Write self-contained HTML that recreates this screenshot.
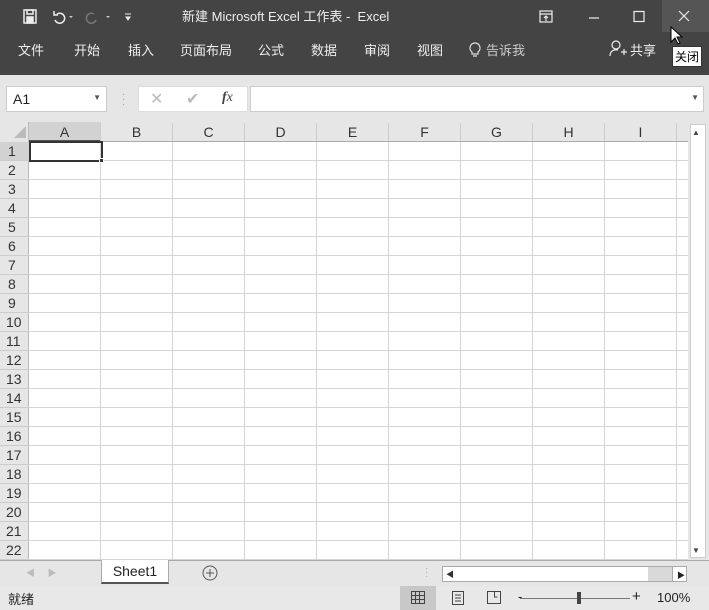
<!DOCTYPE html><html><head><meta charset="utf-8"><style>
*{margin:0;padding:0;box-sizing:border-box}
body{width:709px;height:610px;overflow:hidden;background:#e6e6e6;font-family:"Liberation Sans","Noto Sans CJK SC",sans-serif;position:relative;font-size:13px;color:#222}
.a{position:absolute}
.top{left:0;top:0;width:709px;height:75px;background:#444}
.w{color:#eee}
.tab{top:40px;color:#eee;font-size:13px}
.ch{top:123px;height:19px;width:72px;text-align:center;font-size:14px;color:#333;border-right:1px solid #ccc;line-height:19px}
.rn{left:0;width:29px;height:19px;font-size:14px;color:#333;padding-left:8px;line-height:19px;border-bottom:1px solid #ccc}
</style></head><body>
<div class="a top"></div>
<div class="a" style="left:662px;top:0;width:47px;height:32px;background:#555"></div>
<svg class="a" style="left:22px;top:8px" width="120" height="18"><g fill="none" stroke="#eee" stroke-width="1.5"><rect x="2" y="2" width="12" height="13"/><rect x="5" y="9" width="6" height="6" fill="#eee"/><rect x="5" y="2" width="6" height="4"/><path d="M35 6 a5 5 0 1 1 -2 6 M32 3 v4 h4"/><path d="M72 6 a5 5 0 1 0 2 6" stroke="#777"/></g><path d="M47 8l2 2 2-2z M84 8l2 2 2-2z" fill="#ccc"/><path d="M103 6h6 M104 9l2 3 2-3z" stroke="#eee" fill="#eee"/></svg>
<div class="a w" style="left:182px;top:6px;font-size:13px">新建 Microsoft Excel 工作表 - &nbsp;Excel</div>
<svg class="a" style="left:538px;top:8px" width="160" height="18"><g fill="none" stroke="#eee" stroke-width="1.2"><rect x="2" y="3" width="12" height="11"/><path d="M2 6h12 M8 13V8 M6 10l2-2 2 2"/><path d="M51 10h10"/><rect x="96" y="3.5" width="10" height="10"/><path d="M141 3l10 10 M151 3l-10 10"/></g></svg>
<div class="a tab" style="left:18px">文件</div>
<div class="a tab" style="left:74px">开始</div>
<div class="a tab" style="left:128px">插入</div>
<div class="a tab" style="left:180px">页面布局</div>
<div class="a tab" style="left:258px">公式</div>
<div class="a tab" style="left:311px">数据</div>
<div class="a tab" style="left:364px">审阅</div>
<div class="a tab" style="left:417px">视图</div>
<svg class="a" style="left:468px;top:42px" width="14" height="16"><path d="M7 1a5 5 0 0 0-3 9v2h6v-2a5 5 0 0 0-3-9zM5 14h4" fill="none" stroke="#ddd" stroke-width="1.2"/></svg>
<div class="a tab" style="left:486px;color:#ccc">告诉我</div>
<svg class="a" style="left:608px;top:39px" width="20" height="20"><g fill="none" stroke="#eee" stroke-width="1.2"><circle cx="8" cy="6" r="4"/><path d="M2 17c0-5 4-7 8-6 M13 13h6 M16 10v6"/></g></svg>
<div class="a tab" style="left:630px">共享</div>
<svg class="a" style="left:670px;top:26px" width="14" height="20"><path d="M1 1v15l4-4 3 6 2-1-3-6h5z" fill="#fff" stroke="#000"/></svg>
<div class="a" style="left:672px;top:46px;background:#fff;border:1px solid #333;font-size:12px;padding:1px 2px;color:#000">关闭</div>
<div class="a" style="left:6px;top:86px;width:101px;height:26px;background:#fff;border:1px solid #ccc;padding:4px 6px;font-size:14px">A1<span style="position:absolute;right:5px;top:6px;font-size:8px;color:#555">▼</span></div>
<div class="a" style="left:122px;top:92px;color:#999;font-size:10px;line-height:5px">·<br>·<br>·</div>
<div class="a" style="left:138px;top:86px;width:110px;height:26px;background:#fff;border:1px solid #ddd"></div>
<div class="a" style="left:150px;top:89px;color:#bbb;font-size:16px">✕</div>
<div class="a" style="left:186px;top:89px;color:#bbb;font-size:16px">✔</div>
<div class="a" style="left:222px;top:90px;font-family:'Liberation Serif',serif;font-style:italic;font-size:14px;color:#444"><b>f</b>x</div>
<div class="a" style="left:250px;top:86px;width:454px;height:26px;background:#fff;border:1px solid #ccc"><span style="position:absolute;right:4px;top:6px;font-size:8px;color:#555">▼</span></div>
<div class="a" style="left:0;top:122px;width:688px;height:438px;background:#fff;
background-image:linear-gradient(#e6e6e6,#e6e6e6),repeating-linear-gradient(to bottom,transparent 0 18px,#d4d4d4 18px 19px),repeating-linear-gradient(to right,transparent 0 71px,#d4d4d4 71px 72px);
background-size:688px 20px,688px 418px,659px 438px;background-position:0 0,0 20px,29px 0;background-repeat:no-repeat,no-repeat,no-repeat"></div>
<div class="a" style="left:0;top:122px;width:29px;height:438px;background:#e6e6e6;border-right:1px solid #bbb"></div>
<div class="a" style="left:29px;top:122px;width:72px;height:20px;background:#d2d2d2;border-bottom:2px solid #555"></div>
<div class="a" style="left:0;top:142px;width:29px;height:19px;background:#d2d2d2"></div>
<svg class="a" style="left:14px;top:126px" width="12" height="12"><path d="M12 0V12H0z" fill="#bbb"/></svg>
<div class="a ch" style="left:29px">A</div><div class="a ch" style="left:101px">B</div><div class="a ch" style="left:173px">C</div><div class="a ch" style="left:245px">D</div><div class="a ch" style="left:317px">E</div><div class="a ch" style="left:389px">F</div><div class="a ch" style="left:461px">G</div><div class="a ch" style="left:533px">H</div><div class="a ch" style="left:605px;width:72px">I</div>
<div class="a" style="left:29px;top:141px;width:659px;height:1px;background:#aaa"></div>
<div class="a" style="left:29px;top:141px;width:74px;height:21px;border:2px solid #333"></div>
<div class="a" style="left:99px;top:158px;width:5px;height:5px;background:#333;border:1px solid #fff"></div>
<div class="a rn" style="top:142px">1</div><div class="a rn" style="top:161px">2</div><div class="a rn" style="top:180px">3</div><div class="a rn" style="top:199px">4</div><div class="a rn" style="top:218px">5</div><div class="a rn" style="top:237px">6</div><div class="a rn" style="top:256px">7</div><div class="a rn" style="top:275px">8</div><div class="a rn" style="top:294px">9</div><div class="a rn" style="top:313px;padding-left:6px">10</div><div class="a rn" style="top:332px;padding-left:6px">11</div><div class="a rn" style="top:351px;padding-left:6px">12</div><div class="a rn" style="top:370px;padding-left:6px">13</div><div class="a rn" style="top:389px;padding-left:6px">14</div><div class="a rn" style="top:408px;padding-left:6px">15</div><div class="a rn" style="top:427px;padding-left:6px">16</div><div class="a rn" style="top:446px;padding-left:6px">17</div><div class="a rn" style="top:465px;padding-left:6px">18</div><div class="a rn" style="top:484px;padding-left:6px">19</div><div class="a rn" style="top:503px;padding-left:6px">20</div><div class="a rn" style="top:522px;padding-left:6px">21</div><div class="a rn" style="top:541px;padding-left:6px">22</div>
<div class="a" style="left:688px;top:122px;width:21px;height:438px;background:#e6e6e6"></div>
<div class="a" style="left:690px;top:124px;width:16px;height:434px;background:#fff;border:1px solid #ccc"></div>
<div class="a" style="left:692px;top:128px;font-size:8px;color:#444">▲</div>
<div class="a" style="left:692px;top:546px;font-size:8px;color:#444">▼</div>
<div class="a" style="left:0;top:560px;width:709px;height:1px;background:#aaa"></div>
<div class="a" style="left:26px;top:566px;font-size:9px;color:#bbb">◀ &nbsp;&nbsp;&nbsp;&nbsp;▶</div>
<div class="a" style="left:101px;top:560px;width:68px;height:24px;background:#fff;border:1px solid #aaa;border-top:none;border-bottom:2px solid #555;text-align:center;font-size:14px;line-height:22px">Sheet1</div>
<svg class="a" style="left:202px;top:565px" width="16" height="16"><circle cx="8" cy="8" r="7" fill="none" stroke="#555"/><path d="M8 4v8M4 8h8" stroke="#555"/></svg>
<div class="a" style="left:425px;top:567px;color:#aaa;font-size:10px;line-height:4px">·<br>·<br>·</div>
<div class="a" style="left:442px;top:566px;width:245px;height:16px;background:#fff;border:1px solid #aaa"></div>
<div class="a" style="left:648px;top:567px;width:38px;height:14px;background:#d9d9d9"></div>
<div class="a" style="left:446px;top:569px;font-size:8px;color:#333">◀</div>
<div class="a" style="left:672px;top:566px;width:15px;height:16px;background:#fff;border:1px solid #aaa;font-size:8px;padding:3px 4px">▶</div>
<div class="a" style="left:0;top:586px;width:709px;height:24px;background:#e8e8e8"></div>
<div class="a" style="left:8px;top:589px;font-size:13px">就绪</div>
<div class="a" style="left:400px;top:586px;width:36px;height:24px;background:#c8c8c8"></div>
<svg class="a" style="left:410px;top:590px" width="100" height="16"><g fill="none" stroke="#444"><rect x="1.5" y="1.5" width="13" height="12"/><path d="M1 5.5h14M1 9.5h14M5.5 1v13M9.5 1v13"/><rect x="42.5" y="1.5" width="11" height="13"/><path d="M45 5h6M45 8h6M45 11h6"/><rect x="77.5" y="1.5" width="13" height="12"/><path d="M84.5 1v6h3"/></g></svg>
<div class="a" style="left:520px;top:598px;width:110px;height:1px;background:#777"></div>
<div class="a" style="left:518px;top:589px;font-size:13px">-</div>
<div class="a" style="left:577px;top:592px;width:4px;height:12px;background:#444"></div>
<div class="a" style="left:632px;top:588px;font-size:15px">+</div>
<div class="a" style="left:657px;top:590px;font-size:13px">100%</div>
</body></html>
